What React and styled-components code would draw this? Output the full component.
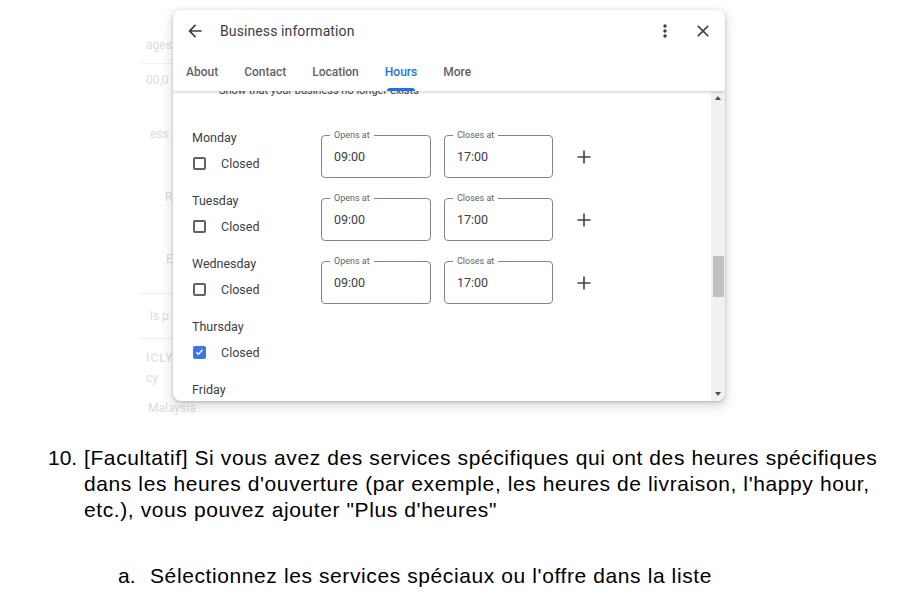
import React from 'react';
import styled, { createGlobalStyle } from 'styled-components';

const GlobalStyle = createGlobalStyle`
	html, body {
		margin: 0;
		padding: 0;
		background: #fff;
	}
	body {
		width: 908px;
		height: 603px;
		overflow: hidden;
		font-family: Roboto, 'Liberation Sans', sans-serif;
	}
	* {
		box-sizing: border-box;
	}
`;

// screenshot area: faded page behind, dialog on top
const Stage = styled.div`
	display: grid;
	height: 415px;
`;

const Backdrop = styled.div`
	grid-area: 1 / 1;
	display: flex;
	flex-direction: column;
	padding-left: 140px;
	width: 220px;
	font-size: 12px;
	line-height: 14px;
	color: #dcdcdc;
`;

const GhostText = styled.div`
	margin-top: ${(p) => p.$top}px;
	padding-left: ${(p) => p.$indent || 6}px;
	font-weight: ${(p) => (p.$bold ? 500 : 400)};
	letter-spacing: ${(p) => (p.$bold ? '1px' : '0')};
	color: ${(p) => (p.$bold ? '#e2e2e2' : 'inherit')};
	white-space: nowrap;
`;

const GhostLine = styled.div`
	margin-top: ${(p) => p.$top}px;
	height: 1px;
	background: #f2f2f2;
`;

const Card = styled.div`
	grid-area: 1 / 1;
	align-self: start;
	margin: 10px 0 0 173px;
	width: 552px;
	height: 391px;
	background: #fff;
	border-radius: 8px;
	overflow: hidden;
	display: flex;
	flex-direction: column;
	box-shadow: 0 1px 3px rgba(60, 64, 67, 0.3), 0 4px 8px 3px rgba(60, 64, 67, 0.15);
`;

const Header = styled.header`
	position: relative;
	z-index: 1;
	background: #fff;
	box-shadow: 0 1px 3px rgba(60, 64, 67, 0.28);
`;

const TitleRow = styled.div`
	display: flex;
	align-items: center;
	height: 42px;
	padding: 0 12px;
	color: #3c4043;
`;

const Title = styled.h1`
	margin: 0 0 0 15px;
	flex: 1;
	font-size: 14px;
	font-weight: 400;
	color: #3c4043;
	letter-spacing: 0.1px;
`;

const IconButton = styled.span`
	display: flex;
	width: 20px;
	height: 20px;
	margin-left: ${(p) => p.$gap || 0}px;
	color: #3c4043;
`;

const Tabs = styled.nav`
	display: flex;
	gap: 26px;
	padding-left: 13px;
	height: 39px;
`;

const Tab = styled.div`
	display: flex;
	flex-direction: column;
	padding-top: 13px;
	font-size: 12px;
	line-height: 14px;
	font-weight: 500;
	color: ${(p) => (p.$active ? '#1a73e8' : '#5f6368')};

	&::after {
		content: '';
		margin: auto 2px 0;
		height: 3px;
		border-radius: 3px 3px 0 0;
		background: ${(p) => (p.$active ? '#1a73e8' : 'transparent')};
	}
`;

const Body = styled.div`
	flex: 1;
	display: flex;
	min-height: 0;
`;

const Main = styled.div`
	flex: 1;
	overflow: hidden;
	padding-left: 19px;
`;

const ClippedNote = styled.p`
	margin: -7px 0 0;
	padding-left: 27px;
	font-size: 11px;
	line-height: 14px;
	color: #3c4043;
`;

const DayList = styled.div`
	margin-top: 31px;
	display: flex;
	flex-direction: column;
`;

const DayRow = styled.div`
	display: flex;
	height: 63px;
`;

const DayInfo = styled.div`
	width: 129px;
	display: flex;
	flex-direction: column;
	gap: 7px;
`;

const DayName = styled.div`
	font-size: 12.5px;
	line-height: 18px;
	color: #3c4043;
`;

const CheckRow = styled.label`
	display: flex;
	align-items: center;
	height: 18px;
	padding-left: 1px;
	font-size: 12.5px;
	color: #3c4043;
`;

const Box = styled.span`
	display: flex;
	align-items: center;
	justify-content: center;
	width: 13px;
	height: 13px;
	margin-right: 15px;
	border-radius: 2px;
	border: 2px solid ${(p) => (p.$checked ? '#3b78e7' : '#5f6368')};
	background: ${(p) => (p.$checked ? '#3b78e7' : '#fff')};
`;

const Fields = styled.div`
	display: flex;
	align-items: center;
	gap: 13px;
	margin-top: 6px;
	height: 43px;
`;

const Field = styled.div`
	position: relative;
	width: ${(p) => p.$w}px;
	height: 43px;
	border: 1px solid #80868b;
	border-radius: 4px;
	padding: 12px 0 0 12px;
	font-size: 12.5px;
	line-height: 18px;
	color: #3c4043;
`;

const FieldLabel = styled.span`
	position: absolute;
	top: -6px;
	left: 8px;
	padding: 0 4px;
	background: #fff;
	font-size: 9px;
	line-height: 10px;
	color: #5f6368;
`;

const AddButton = styled.span`
	display: flex;
	margin-left: 6px;
	width: 24px;
	height: 24px;
	color: #3c4043;
`;

const ScrollBar = styled.div`
	width: 14px;
	background: #f1f1f1;
	display: flex;
	flex-direction: column;
	align-items: center;
`;

const Arrow = styled.div`
	height: 14px;
	display: flex;
	align-items: center;
	justify-content: center;

	&::before {
		content: '';
		border-left: 3.5px solid transparent;
		border-right: 3.5px solid transparent;
		${(p) => (p.$down ? 'border-top: 4px solid #505050;' : 'border-bottom: 4px solid #505050;')}
	}
`;

const Track = styled.div`
	flex: 1;
	width: 100%;
	display: flex;
	flex-direction: column;
	align-items: center;
`;

const Thumb = styled.div`
	margin-top: 151px;
	width: 11px;
	height: 41px;
	background: #c1c1c1;
`;

// document text below the screenshot
const Steps = styled.div`
	margin-top: 30px;
	font-family: 'Liberation Sans', Arial, sans-serif;
	font-size: 21px;
	line-height: 26px;
	letter-spacing: 0.6px;
	color: #000;
`;

const Step = styled.div`
	display: flex;
	padding-left: ${(p) => p.$indent}px;
	margin-top: ${(p) => p.$top || 0}px;
`;

const Marker = styled.span`
	flex: none;
	width: ${(p) => p.$w}px;
	letter-spacing: 0;
`;

const StepText = styled.span`
	width: ${(p) => p.$w}px;
`;

const Svg = ({ d, size = 20 }) => (
	<svg width={size} height={size} viewBox="0 0 24 24" fill="currentColor">
		<path d={d} />
	</svg>
);

const icons = {
	back: 'M20 11H7.83l5.59-5.59L12 4l-8 8 8 8 1.41-1.41L7.83 13H20v-2z',
	more: 'M12 8c1.1 0 2-.9 2-2s-.9-2-2-2-2 .9-2 2 .9 2 2 2zm0 2c-1.1 0-2 .9-2 2s.9 2 2 2 2-.9 2-2-.9-2-2-2zm0 6c-1.1 0-2 .9-2 2s.9 2 2 2 2-.9 2-2-.9-2-2-2z',
	close: 'M19 6.41L17.59 5 12 10.59 6.41 5 5 6.41 10.59 12 5 17.59 6.41 19 12 13.41 17.59 19 19 17.59 13.41 12z',
};

const Plus = () => (
	<svg width="24" height="24" viewBox="0 0 24 24" stroke="currentColor" strokeWidth="1.6" fill="none">
		<path d="M12 5.5v13M5.5 12h13" />
	</svg>
);

const Check = () => (
	<svg width="10" height="10" viewBox="0 0 10 10" fill="none" stroke="#fff" strokeWidth="1.5">
		<path d="M1.5 5.2l2.3 2.3 4.7-5" />
	</svg>
);

const tabs = ['About', 'Contact', 'Location', 'Hours', 'More'];

const days = [
	{ name: 'Monday', closed: false },
	{ name: 'Tuesday', closed: false },
	{ name: 'Wednesday', closed: false },
	{ name: 'Thursday', closed: true },
	{ name: 'Friday', closed: false, cut: true },
];

const Day = ({ name, closed, cut }) => (
	<DayRow>
		<DayInfo>
			<DayName>{name}</DayName>
			{!cut && (
				<CheckRow>
					<Box $checked={closed}>{closed && <Check />}</Box>
					Closed
				</CheckRow>
			)}
		</DayInfo>
		{!closed && !cut && (
			<Fields>
				<Field $w={110}>
					<FieldLabel>Opens at</FieldLabel>
					09:00
				</Field>
				<Field $w={109}>
					<FieldLabel>Closes at</FieldLabel>
					17:00
				</Field>
				<AddButton>
					<Plus />
				</AddButton>
			</Fields>
		)}
	</DayRow>
);

const App = () => {
	return (
		<>
			<GlobalStyle />
			<Stage>
				<Backdrop>
					<GhostText $top={38}>ages</GhostText>
					<GhostLine $top={11} />
					<GhostText $top={9}>00,0</GhostText>
					<GhostText $top={40} $indent={10}>ess</GhostText>
					<GhostText $top={49} $indent={25}>R</GhostText>
					<GhostText $top={48} $indent={26}>E</GhostText>
					<GhostLine $top={27} />
					<GhostText $top={15} $indent={10}>is p</GhostText>
					<GhostLine $top={15} />
					<GhostText $top={12} $bold>ICLY</GhostText>
					<GhostText $top={6}>cy</GhostText>
					<GhostText $top={16} $indent={8}>Malaysia</GhostText>
				</Backdrop>
				<Card>
					<Header>
						<TitleRow>
							<IconButton>
								<Svg d={icons.back} />
							</IconButton>
							<Title>Business information</Title>
							<IconButton>
								<Svg d={icons.more} />
							</IconButton>
							<IconButton $gap={18}>
								<Svg d={icons.close} />
							</IconButton>
						</TitleRow>
						<Tabs>
							{tabs.map((t) => (
								<Tab key={t} $active={t === 'Hours'}>
									{t}
								</Tab>
							))}
						</Tabs>
					</Header>
					<Body>
						<Main>
							<ClippedNote>Show that your business no longer exists</ClippedNote>
							<DayList>
								{days.map((d) => (
									<Day key={d.name} {...d} />
								))}
							</DayList>
						</Main>
						<ScrollBar>
							<Arrow />
							<Track>
								<Thumb />
							</Track>
							<Arrow $down />
						</ScrollBar>
					</Body>
				</Card>
			</Stage>
			<Steps>
				<Step $indent={48}>
					<Marker $w={36}>10.</Marker>
					<StepText $w={805}>
						[Facultatif] Si vous avez des services spécifiques qui ont des heures spécifiques dans
						les heures d'ouverture (par exemple, les heures de livraison, l'happy hour, etc.), vous
						pouvez ajouter "Plus d'heures"
					</StepText>
				</Step>
				<Step $indent={118} $top={40}>
					<Marker $w={32}>a.</Marker>
					<StepText $w={740}>Sélectionnez les services spéciaux ou l'offre dans la liste</StepText>
				</Step>
			</Steps>
		</>
	);
};

export default App;
